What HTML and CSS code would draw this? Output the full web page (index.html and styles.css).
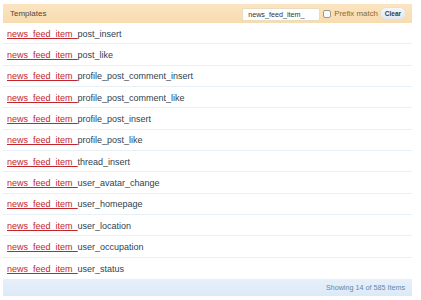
FILE: index.html
```html
<!DOCTYPE html>
<html>
<head>
<meta charset="utf-8">
<link rel="stylesheet" href="styles.css">
</head>
<body>
<div class="panel">
  <div class="head">
    <span class="title">Templates</span>
    <div class="filter">
      <input class="search" type="text" value="news_feed_item_">
      <span class="check"></span>
      <span class="prefix">Prefix match</span>
      <span class="clear">Clear</span>
    </div>
  </div>
  <ul class="list">
    <li><a>news_feed_item_</a>post_insert</li>
    <li><a>news_feed_item_</a>post_like</li>
    <li><a>news_feed_item_</a>profile_post_comment_insert</li>
    <li><a>news_feed_item_</a>profile_post_comment_like</li>
    <li><a>news_feed_item_</a>profile_post_insert</li>
    <li><a>news_feed_item_</a>profile_post_like</li>
    <li><a>news_feed_item_</a>thread_insert</li>
    <li><a>news_feed_item_</a>user_avatar_change</li>
    <li><a>news_feed_item_</a>user_homepage</li>
    <li><a>news_feed_item_</a>user_location</li>
    <li><a>news_feed_item_</a>user_occupation</li>
    <li><a>news_feed_item_</a>user_status</li>
  </ul>
  <div class="foot">Showing 14 of 585 Items</div>
</div>
</body>
</html>
```
FILE: styles.css
```css
html, body {
  margin: 0;
  padding: 0;
  background: #ffffff;
  font-family: "Liberation Sans", Arial, sans-serif;
}
.panel {
  margin: 4px 0 0 3px;
  width: 409px;
}
.head {
  height: 19px;
  background: linear-gradient(#fbe4c0, #f8dcb0);
  display: flex;
  align-items: center;
  justify-content: space-between;
  padding: 0 7px 0 7px;
  box-sizing: border-box;
}
.title {
  font-size: 8px;
  color: #5a4630;
}
.filter {
  display: flex;
  align-items: center;
}
.search {
  width: 78px;
  height: 13px;
  box-sizing: border-box;
  border: 1px solid #eadcc2;
  border-radius: 2px;
  background: #ffffff;
  font-family: "Liberation Sans", Arial, sans-serif;
  font-size: 7.2px;
  color: #333333;
  padding: 0 0 0 5px;
  margin: 1px 3px 0 0;
  outline: none;
}
.check {
  width: 8px;
  height: 8px;
  box-sizing: border-box;
  border: 1px solid #9a9a9a;
  border-radius: 2px;
  background: #fafafa;
  margin-right: 3px;
}
.prefix {
  font-size: 7.9px;
  color: #8a6a36;
  margin-right: 3px;
}
.clear {
  display: inline-block;
  width: 24px;
  height: 11px;
  line-height: 11px;
  text-align: center;
  font-size: 6.5px;
  font-weight: bold;
  color: #2f3c4a;
  background: linear-gradient(#f4f7fb, #e1e8f0);
  border-radius: 5px;
  box-shadow: 0 0 0 0.5px #d6dde6;
}
.list {
  list-style: none;
  margin: 0;
  padding: 0;
}
.list li {
  height: 21.33px;
  box-sizing: border-box;
  border-bottom: 1px solid #e8f0f7;
  padding: 1px 0 0 4px;
  display: flex;
  align-items: center;
  font-size: 9px;
  color: #2e3f52;
}
.list li:last-child {
  border-bottom: none;
}
.list a {
  color: #c4252c;
  text-decoration: underline;
}
.foot {
  height: 17px;
  background: linear-gradient(#e6f0fa, #dce9f6);
  font-size: 7.2px;
  color: #6488aa;
  text-align: right;
  padding-right: 7px;
  line-height: 17px;
}
```
